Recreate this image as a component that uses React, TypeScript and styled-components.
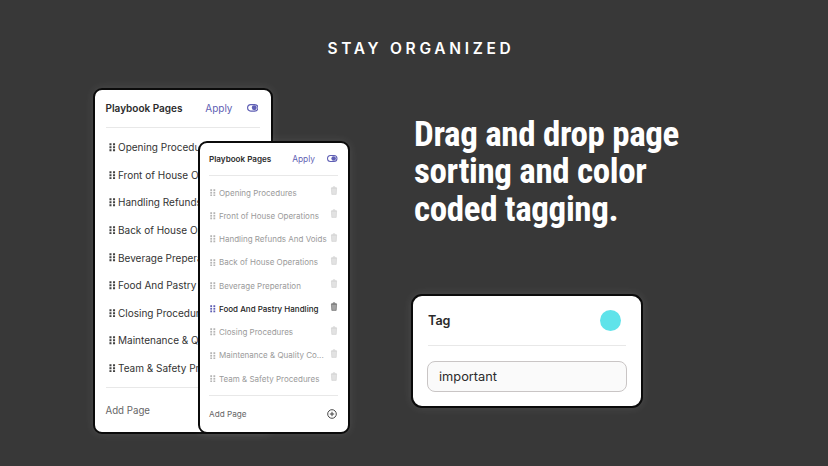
import React from "react";
import styled, { createGlobalStyle } from "styled-components";

const Global = createGlobalStyle`
  html, body { margin: 0; padding: 0; background: #383838; }
  * { box-sizing: border-box; }
`;

const Page = styled.div`
  width: 828px;
  height: 466px;
  overflow: hidden;
  background: #383838;
  font-family: Inter, "Liberation Sans", sans-serif;
  display: flex;
  flex-direction: column;
  align-items: center;
`;

const Eyebrow = styled.h2`
  margin: 40px 0 0 14px;
  height: 17px;
  color: #fff;
  font: 600 15.5px/17px Inter, sans-serif;
  letter-spacing: 3.7px;
  white-space: nowrap;
`;

const Body = styled.div`
  width: 100%;
  display: flex;
  margin-top: 31px;
  padding-left: 93px;
`;

const Cards = styled.div`
  position: relative;
  width: 256px;
  height: 346px;
  flex: none;
`;

const Window = styled.div`
  background: #fff;
  border: 2.5px solid #0b0b0b;
  border-radius: 9px;
  box-shadow: 0 0 10px rgba(255, 255, 255, 0.1);
`;

const BackCard = styled(Window)`
  width: 180px;
  height: 346px;
  padding: 0 11px 0 10.5px;
  display: flex;
  flex-direction: column;
  overflow: hidden;
`;

const FrontCard = styled(Window)`
  position: absolute;
  left: 104.5px;
  top: 53px;
  width: 152px;
  height: 293px;
  padding: 0 9.5px;
  display: flex;
  flex-direction: column;
`;

const Header = styled.div<{ $h: number }>`
  height: ${(p) => p.$h}px;
  flex: none;
  display: flex;
  align-items: center;
  padding-bottom: 1px;
  border-bottom: 1px solid #e8e8e8;
`;

const Title = styled.div<{ $size: number }>`
  flex: 1;
  font-size: ${(p) => p.$size}px;
  font-weight: 600;
  color: #2b2b2b;
  white-space: nowrap;
`;

const Apply = styled.div<{ $size: number; $mr: number }>`
  font-size: ${(p) => p.$size}px;
  font-weight: 400;
  color: #5f5fb4;
  margin-right: ${(p) => p.$mr}px;
`;

const List = styled.div<{ $pitch: number; $pad: number }>`
  flex: none;
  display: grid;
  grid-auto-rows: ${(p) => p.$pitch}px;
  padding: ${(p) => p.$pad}px 0;
`;

const Row = styled.div<{ $indent: number; $gap: number; $max?: number }>`
  display: flex;
  align-items: center;
  gap: ${(p) => p.$gap}px;
  padding-left: ${(p) => p.$indent}px;
  min-width: 0;
  max-width: ${(p) => (p.$max ? `${p.$max}px` : "none")};
  overflow: hidden;
`;

const RowText = styled.div<{ $size: number; $tone: string; $weight?: number }>`
  font-size: ${(p) => p.$size}px;
  color: ${(p) => p.$tone};
  font-weight: ${(p) => p.$weight ?? 400};
  white-space: nowrap;
  flex: 1;
  min-width: 0;
  overflow: hidden;
`;

const Footer = styled.div`
  flex: 1;
  border-top: 1px solid #e8e8e8;
  display: flex;
  align-items: center;
  justify-content: space-between;
`;

const AddText = styled.div<{ $size: number }>`
  font-size: ${(p) => p.$size}px;
  color: #666;
`;

const Side = styled.div`
  flex: 1;
  padding-left: 65px;
  display: flex;
  flex-direction: column;
`;

const Headline = styled.h1`
  margin: 28px 0 0;
  font-family: "Liberation Sans Narrow", "Roboto Condensed", "Liberation Sans", sans-serif;
  font-weight: 700;
  font-size: 35px;
  letter-spacing: -0.36px;
  line-height: 37.4px;
  color: #fff;
  white-space: nowrap;
`;

const TagCard = styled(Window)`
  width: 232px;
  height: 114px;
  margin: 66px 0 0 -3px;
  padding: 0 15px;
  border-radius: 11px;
`;

const TagHead = styled.div`
  height: 50px;
  display: flex;
  align-items: center;
  justify-content: space-between;
  border-bottom: 1px solid #e8e8e8;
`;

const TagLabel = styled.div`
  font-size: 12.6px;
  font-weight: 600;
  color: #2b2b2b;
`;

const Swatch = styled.div`
  width: 21px;
  height: 21px;
  border-radius: 50%;
  background: #5fe3ea;
  margin-right: 5px;
`;

const TagInput = styled.div`
  margin: 15px -1px 0;
  height: 31px;
  border: 1px solid #c9c5c5;
  border-radius: 8px;
  background: #fafafa;
  padding-left: 11px;
  display: flex;
  align-items: center;
  font-size: 12.8px;
  color: #2b2b2b;
`;

const Grip = ({ s, c }: { s: number; c: string }) => (
  <svg width={s} height={s} viewBox="0 0 10 10" style={{ flex: "none" }}>
    {[2.9, 7.1].map((x) =>
      [1.5, 5, 8.5].map((y) => <rect key={`${x}-${y}`} x={x - 1.2} y={y - 1.2} width={2.4} height={2.4} fill={c} />)
    )}
  </svg>
);

const Toggle = ({ w, mr = 0 }: { w: number; mr?: number }) => (
  <svg width={w} height={(w * 8) / 12} viewBox="0 0 12 8" style={{ flex: "none", marginRight: mr }}>
    <rect x="0.6" y="0.6" width="10.8" height="6.8" rx="3.4" fill="#fff" stroke="#5f5fb4" strokeWidth="1.2" />
    <circle cx="7.6" cy="4" r="2.6" fill="#5f5fb4" />
  </svg>
);

const Trash = ({ c }: { c: string }) => (
  <svg width="8" height="9" viewBox="0 0 8 9" style={{ flex: "none", margin: "0 0.5px 4px 0" }}>
    <path d="M1 2h6M3 2V.9h2V2" fill="none" stroke={c} strokeWidth="0.8" />
    <path d="M1.4 2.4h5.2l-.4 6H1.8z" fill={c} fillOpacity="0.6" stroke={c} strokeWidth="0.6" />
  </svg>
);

const Plus = () => (
  <svg width="10" height="10" viewBox="0 0 10 10" style={{ flex: "none", marginRight: 1 }}>
    <circle cx="5" cy="5" r="4.3" fill="none" stroke="#333" strokeWidth="0.9" />
    <path d="M5 2.8v4.4M2.8 5h4.4" stroke="#333" strokeWidth="0.9" />
  </svg>
);

const backRows = [
  "Opening Procedures",
  "Front of House Operations",
  "Handling Refunds And Voids",
  "Back of House Operations",
  "Beverage Preperation",
  "Food And Pastry Handling",
  "Closing Procedures",
  "Maintenance & Quality Control",
  "Team & Safety Procedures",
];

const frontRows = [
  "Opening Procedures",
  "Front of House Operations",
  "Handling Refunds And Voids",
  "Back of House Operations",
  "Beverage Preperation",
  "Food And Pastry Handling",
  "Closing Procedures",
  "Maintenance & Quality Co...",
  "Team & Safety Procedures",
];

export default function App() {
  return (
    <Page>
      <Global />
      <Eyebrow>STAY ORGANIZED</Eyebrow>
      <Body>
        <Cards>
          <BackCard>
            <Header $h={38}>
              <Title $size={10}>Playbook Pages</Title>
              <Apply $size={10} $mr={14}>Apply</Apply>
              <Toggle w={11.5} mr={2} />
            </Header>
            <List $pitch={27.6} $pad={5.5}>
              {backRows.map((t) => (
                <Row key={t} $indent={2} $gap={2} $max={92}>
                  <Grip s={8.5} c="#444" />
                  <RowText $size={10} $tone="#333">{t}</RowText>
                </Row>
              ))}
            </List>
            <Footer>
              <AddText $size={9.7}>Add Page</AddText>
            </Footer>
          </BackCard>
          <FrontCard>
            <Header $h={33}>
              <Title $size={8.1}>Playbook Pages</Title>
              <Apply $size={8.4} $mr={12}>Apply</Apply>
              <Toggle w={10.5} mr={0.5} />
            </Header>
            <List $pitch={23.25} $pad={5}>
              {frontRows.map((t, i) => {
                const on = i === 5;
                return (
                  <Row key={t} $indent={0} $gap={2.5}>
                    <Grip s={7.5} c={on ? "#5f5fb4" : "#b5b5b5"} />
                    <RowText $size={8} $tone={on ? "#222" : "#9a9a9a"} $weight={on ? 500 : 400}>{t}</RowText>
                    <Trash c={on ? "#666" : "#cfcfcf"} />
                  </Row>
                );
              })}
            </List>
            <Footer>
              <AddText $size={8.2}>Add Page</AddText>
              <Plus />
            </Footer>
          </FrontCard>
        </Cards>
        <Side>
          <Headline>
            Drag and drop page
            <br />
            sorting and color
            <br />
            coded tagging.
          </Headline>
          <TagCard>
            <TagHead>
              <TagLabel>Tag</TagLabel>
              <Swatch />
            </TagHead>
            <TagInput>important</TagInput>
          </TagCard>
        </Side>
      </Body>
    </Page>
  );
}
